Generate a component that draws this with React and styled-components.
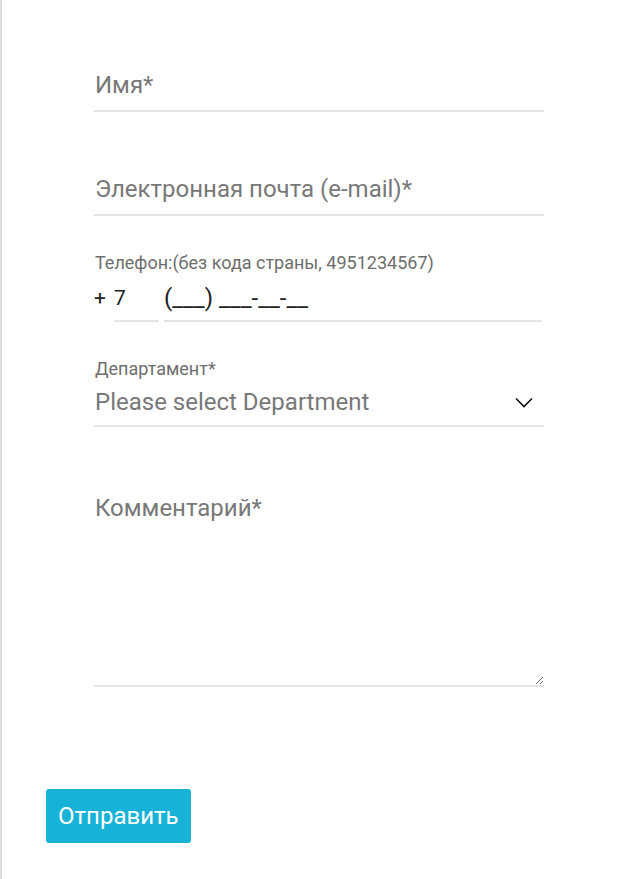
import React from 'react'
import styled, { createGlobalStyle } from 'styled-components'

const Global = createGlobalStyle`
  body {
    margin: 0;
    background: #fff;
    font-family: Roboto, "Noto Sans", sans-serif;
  }
  * { box-sizing: border-box; }
`

const Page = styled.div`
  min-height: 879px;
  border-left: 2px solid #dcdcdc;
  padding: 60px 0 36px 44px;
`

const Form = styled.form`
  display: flex;
  flex-direction: column;
`

const Fields = styled.div`
  width: 450px;
  margin-left: 48px;
  display: flex;
  flex-direction: column;
`

const Field = styled.div`
  margin-top: ${p => p.$gap || 0}px;
`

const Input = styled.input`
  display: block;
  width: 100%;
  height: 52px;
  border: 0;
  border-bottom: 2px solid #e4e4e4;
  padding: 0 1px 0;
  font-family: inherit;
  font-size: 24px;
  color: #333;
  outline: none;
  background: transparent;

  &::placeholder { color: #787878; }
`

const Label = styled.div`
  font-size: 18px;
  color: #6e6e6e;
  line-height: 21px;
  padding-left: 1px;
`

const PhoneRow = styled.div`
  display: flex;
  align-items: flex-end;
  margin-top: 13px;
`

const Plus = styled.span`
  font-size: 21px;
  color: #222;
  line-height: 24px;
  padding-bottom: 12px;
  width: 20px;
`

const PhoneInput = styled.input`
  height: 36px;
  border: 0;
  border-bottom: 2px solid #e4e4e4;
  padding: 0 0 10px;
  font-family: inherit;
  font-size: ${p => p.$size || 21}px;
  color: #222;
  outline: none;
  width: ${p => p.$w}px;
  margin-right: ${p => p.$mr || 0}px;
  &::placeholder { color: #222; }
`

const SelectBox = styled.div`
  display: flex;
  align-items: center;
  justify-content: space-between;
  height: 48px;
  border-bottom: 2px solid #e4e4e4;
  padding: 0 11px 0 1px;
  font-size: 24px;
  color: #787878;
`

const TextArea = styled.textarea`
  display: block;
  width: 100%;
  height: 206px;
  border: 0;
  border-bottom: 2px solid #e4e4e4;
  padding: 13px 1px 0;
  font-family: inherit;
  font-size: 24px;
  color: #333;
  outline: none;
  resize: vertical;
  &::placeholder { color: #787878; }
`

const Submit = styled.button`
  align-self: flex-start;
  margin-top: 102px;
  height: 54px;
  padding: 0 12px;
  border: 0;
  border-radius: 3px;
  background: #17b2d7;
  color: #fff;
  font-family: inherit;
  font-size: 24px;
  cursor: pointer;
`

const Chevron = () => (
  <svg width="18" height="11" viewBox="0 0 18 11" fill="none">
    <path d="M1 1.5 L9 9.5 L17 1.5" stroke="#111" strokeWidth="1.6" />
  </svg>
)

export default function App() {
  return (
    <Page>
      <Global />
      <Form onSubmit={e => e.preventDefault()}>
        <Fields>
          <Field>
            <Input placeholder="Имя*" />
          </Field>
          <Field $gap={52}>
            <Input placeholder="Электронная почта (e-mail)*" />
          </Field>
          <Field $gap={36}>
            <Label>Телефон:(без кода страны, 4951234567)</Label>
            <PhoneRow>
              <Plus>+</Plus>
              <PhoneInput $w={45} $mr={5} defaultValue="7" />
              <PhoneInput $w={378} $size={24} placeholder="(___) ___-__-__" />
            </PhoneRow>
          </Field>
          <Field $gap={36}>
            <Label>Департамент*</Label>
            <SelectBox>
              <span>Please select Department</span>
              <Chevron />
            </SelectBox>
          </Field>
          <Field $gap={54}>
            <TextArea placeholder="Комментарий*" />
          </Field>
        </Fields>
        <Submit type="submit">Отправить</Submit>
      </Form>
    </Page>
  )
}
